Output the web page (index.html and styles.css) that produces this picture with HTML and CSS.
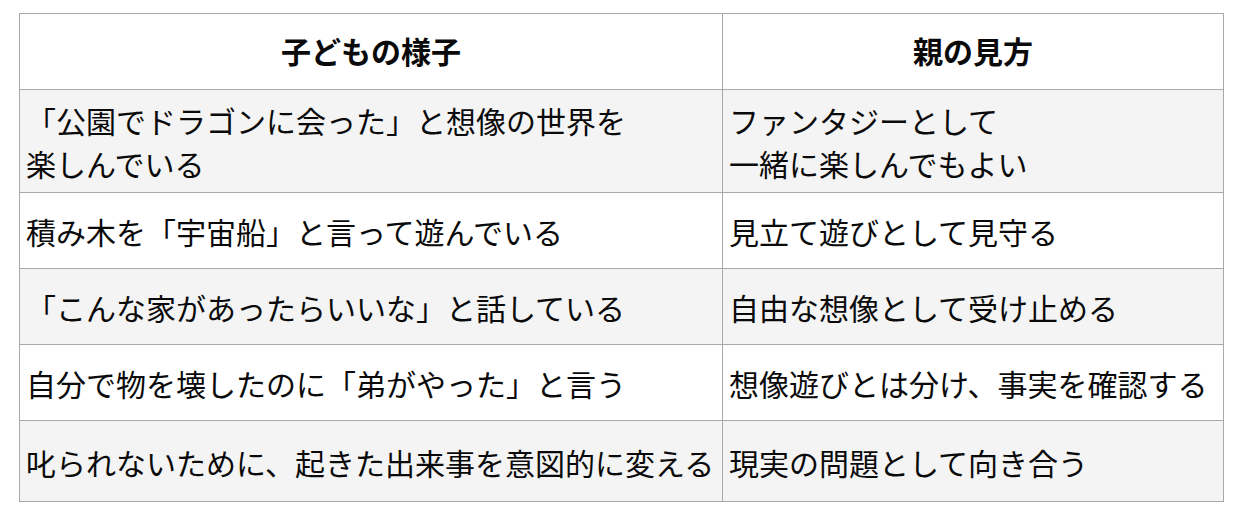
FILE: index.html
```html
<!DOCTYPE html>
<html lang="ja">
<head>
<meta charset="utf-8">
<link rel="stylesheet" href="styles.css">
</head>
<body>
<div class="page">
  <div class="table" role="table">
    <div class="cell head">子どもの様子</div>
    <div class="cell head">親の見方</div>

    <div class="cell alt">「公園でドラゴンに会った」と想像の世界を<br>楽しんでいる</div>
    <div class="cell alt">ファンタジーとして<br>一緒に楽しんでもよい</div>

    <div class="cell">積み木を「宇宙船」と言って遊んでいる</div>
    <div class="cell">見立て遊びとして見守る</div>

    <div class="cell alt">「こんな家があったらいいな」と話している</div>
    <div class="cell alt">自由な想像として受け止める</div>

    <div class="cell">自分で物を壊したのに「弟がやった」と言う</div>
    <div class="cell">想像遊びとは分け、事実を確認する</div>

    <div class="cell alt last">叱られないために、起きた出来事を意図的に変える</div>
    <div class="cell alt last">現実の問題として向き合う</div>
  </div>
</div>
</body>
</html>
```

FILE: styles.css
```css
* { box-sizing: border-box; }
html, body { margin: 0; padding: 0; background: #ffffff; }
.page {
  padding: 13px 0 0 19px;
}
.table {
  display: grid;
  grid-template-columns: 703px 501px;
  width: 1205px;
  border-left: 1px solid #a9a9a9;
  border-top: 1px solid #a9a9a9;
  font-family: "Noto Sans CJK JP", sans-serif;
  font-size: 30px;
  color: #0a0a0a;
}
.cell {
  display: flex;
  align-items: center;
  min-height: 76px;
  padding: 9px 6px 7px 6px;
  line-height: 43px;
  border-right: 1px solid #a9a9a9;
  border-bottom: 1px solid #a9a9a9;
  white-space: nowrap;
  background: #ffffff;
}
.cell.head {
  justify-content: center;
  font-weight: 700;
  padding-top: 4px;
  padding-bottom: 6px;
}
.cell.alt {
  background: #f4f4f4;
}
.cell.last {
  min-height: 81px;
}
```
